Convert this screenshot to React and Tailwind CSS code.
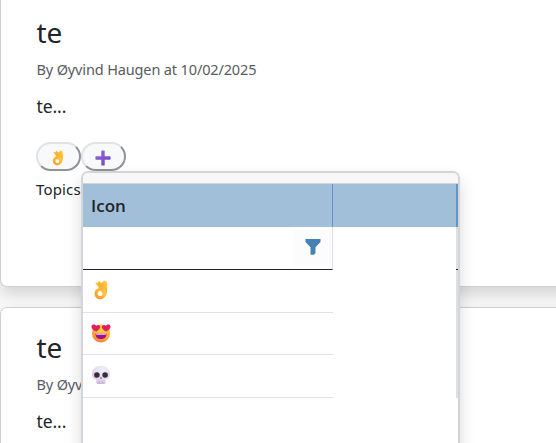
import React from "react";

function OkHand({ className }) {
  return (
    <svg viewBox="0 0 18 20" className={className}>
      <defs>
        <linearGradient id="hand" x1="0" y1="1" x2="1" y2="0">
          <stop offset="0" stopColor="#f79a2e" />
          <stop offset="0.55" stopColor="#fdb62f" />
          <stop offset="1" stopColor="#ffd04a" />
        </linearGradient>
      </defs>
      <path d="M3 2.6L5.4 3.2L7 .8L9.6 3L12 .6Q15 .6 15.1 3.5L15.3 10Q15.2 14 13 16.5L8 9.8L5.6 9.6L6.8 7.5Z" fill="url(#hand)" />
      <path d="M7.5 3.5L9.4 7.2M11 3L11.3 7.4" stroke="#f3a02c" strokeWidth="0.6" fill="none" />
      <circle cx="8.2" cy="13.6" r="4.1" fill="none" stroke="url(#hand)" strokeWidth="3.2" />
      <path d="M7 9.2L11.5 8.8" stroke="#f09327" strokeWidth="0.6" fill="none" />
    </svg>
  );
}

function HeartEyes({ className }) {
  return (
    <svg viewBox="0 0 20 20" className={className}>
      <defs>
        <radialGradient id="face" cx="0.6" cy="0.3" r="0.75">
          <stop offset="0" stopColor="#ffd83d" />
          <stop offset="0.65" stopColor="#ffac2e" />
          <stop offset="1" stopColor="#f0723d" />
        </radialGradient>
      </defs>
      <circle cx="10" cy="10.4" r="9" fill="url(#face)" />
      <path d="M5.2 8.4C2 7.4 .1 5.4.5 3.2C.9 1 4 .8 5.1 2.8C6.7 1.2 9.1 2 9.1 4.1C9.1 6 7.2 7.6 5.2 8.4Z" fill="#e0205c" />
      <path d="M14.8 8.4C18 7.4 19.9 5.4 19.5 3.2C19.1 1 16 .8 14.9 2.8C13.3 1.2 10.9 2 10.9 4.1C10.9 6 12.8 7.6 14.8 8.4Z" fill="#e0205c" />
      <path d="M4.3 10.2Q10 11 15.7 10.2C15.5 14.3 13.4 16 10 16C6.6 16 4.5 14.3 4.3 10.2Z" fill="#a3108f" />
      <path d="M4.5 10.2Q10 11 15.5 10.2L15.3 11.4Q10 12 4.7 11.4Z" fill="#f3d9ea" />
    </svg>
  );
}

function Skull({ className }) {
  return (
    <svg viewBox="0 0 20 20" className={className}>
      <defs>
        <radialGradient id="bone" cx="0.6" cy="0.25" r="0.8">
          <stop offset="0" stopColor="#f3f0f6" />
          <stop offset="0.6" stopColor="#e4dcec" />
          <stop offset="1" stopColor="#cdb4dc" />
        </radialGradient>
      </defs>
      <path d="M10 .8C15 .8 19 4.3 19 9.2C19 11.8 18 14 14.6 14.4V17.4Q14.4 19 13 19H7Q5.6 19 5.4 17.4V14.4C2 14 1 11.8 1 9.2C1 4.3 5 .8 10 .8Z" fill="url(#bone)" />
      <path d="M8.4 16V19M11.6 16V19" stroke="#c6a9d8" strokeWidth="0.7" />
      <circle cx="5.9" cy="10" r="2.8" fill="#3a2b3f" />
      <circle cx="14.1" cy="10" r="2.8" fill="#3a2b3f" />
      <path d="M10 12L11 13.6H9Z" fill="#3a2b3f" />
    </svg>
  );
}

function PurplePlus() {
  return (
    <svg viewBox="0 0 16 16" className="mt-0.5 mr-0.5 size-4">
      <defs>
        <linearGradient id="plus" x1="0" y1="0" x2="1" y2="1">
          <stop offset="0" stopColor="#9667df" />
          <stop offset="1" stopColor="#6b44bd" />
        </linearGradient>
      </defs>
      <path d="M7 .4H9Q9.7.4 9.7 1.1V6.3H14.9Q15.6 6.3 15.6 7V9Q15.6 9.7 14.9 9.7H9.7V14.9Q9.7 15.6 9 15.6H7Q6.3 15.6 6.3 14.9V9.7H1.1Q.4 9.7.4 9V7Q.4 6.3 1.1 6.3H6.3V1.1Q6.3.4 7 .4Z" fill="url(#plus)" />
    </svg>
  );
}

function PostText() {
  return (
    <div className="pl-[0.5px]">
      <h2 className="h-[34px] w-fit text-[28px] leading-[30px]">te</h2>
      <p className="mt-2 h-[21px] whitespace-nowrap text-[14.5px] leading-[21px] tracking-[-0.14px] text-[#565b60]">
        By Øyvind Haugen at 10/02/2025
      </p>
      <p className="mt-[14px] h-6 text-[17.5px] leading-6 tracking-[-0.1px]">te...</p>
    </div>
  );
}

const pill =
  "flex h-[29px] w-[45px] items-center justify-center rounded-full border-2 border-t-[#e3e3e3] border-l-[#e3e3e3] border-r-[#939393] border-b-[#939393] bg-[#f8f9fa]";
const card =
  "w-[600px] shrink-0 border border-[#cfcfcf] bg-white px-[35px] shadow-[0_8px_16px_rgba(0,0,0,0.15)]";
const icons = [OkHand, HeartEyes, Skull];

function ReactionPicker() {
  return (
    <div className="absolute top-[171px] left-[81px] h-[300px] w-[379px] overflow-hidden rounded-t-[7px] border-2 border-[#d3d5d8] bg-white">
      <div className="h-[11px] border-b border-[#d3d3d3] bg-[#f7f7f7]" />
      <div className="flex h-[43px] bg-[#a2bfda] font-['Open_Sans','Noto_Sans',sans-serif] text-[17px] font-semibold">
        <div className="flex w-[250px] items-center border-r border-[#6296c6] pl-2">Icon</div>
        <div className="flex-1 border-r-2 border-[#6296c6]" />
      </div>
      <div className="flex h-[43px]">
        <div className="flex w-[250px] justify-end border-r border-b border-r-[#dee2e6] border-b-[#212529]">
          <div className="my-[3px] flex w-[39px] items-center justify-center bg-[#fcfcfc]">
            <svg viewBox="0 0 16 16" className="mb-0.5 size-4">
              <path d="M.5 0H15.5V3L10.5 8.2V14L9 15.8H5.5V8.2L.5 3Z" fill="#4682b4" />
            </svg>
          </div>
        </div>
        <div className="flex flex-1 flex-col items-end">
          <div className="w-0.5 flex-1 bg-[#dce0e5]" />
          <div className="h-px w-0.5 bg-[#212529]" />
        </div>
      </div>
      <div className="flex h-[128px]">
        <div className="grid w-[250px] grid-rows-[43px_42px_43px]">
          {icons.map((Icon, i) => (
            <div key={i} className="flex items-center border-b border-[#dee2e6] pb-0.5 pl-2">
              <Icon className="size-5" />
            </div>
          ))}
        </div>
        <div className="flex-1 border-r-2 border-[#dce0e5]" />
      </div>
    </div>
  );
}

export default function App() {
  return (
    <main className="relative flex h-[443px] w-full flex-col gap-5 overflow-hidden bg-[#fafafa] font-['Noto_Sans','Open_Sans',sans-serif] text-[#212529]">
      <article className={`${card} h-[287px] rounded-b-[7px] border-t-0 pt-[17px]`}>
        <PostText />
        <div className="mt-6 flex">
          <button className={pill}><OkHand className="mt-0.5 mr-px size-4" /></button>
          <button className={pill}><PurplePlus /></button>
        </div>
        <p className="mt-[7px] text-[15px] leading-[22px] tracking-[0.15px]">Topics</p>
      </article>
      <article className={`${card} relative h-[200px] rounded-t-[7px] pt-6`}>
        <PostText />
      </article>
      <div className="absolute top-[171px] left-[81px] h-[300px] w-[379px] rounded-[7px] shadow-[0_8px_16px_rgba(0,0,0,0.15)]" />
      <ReactionPicker />
    </main>
  );
}
